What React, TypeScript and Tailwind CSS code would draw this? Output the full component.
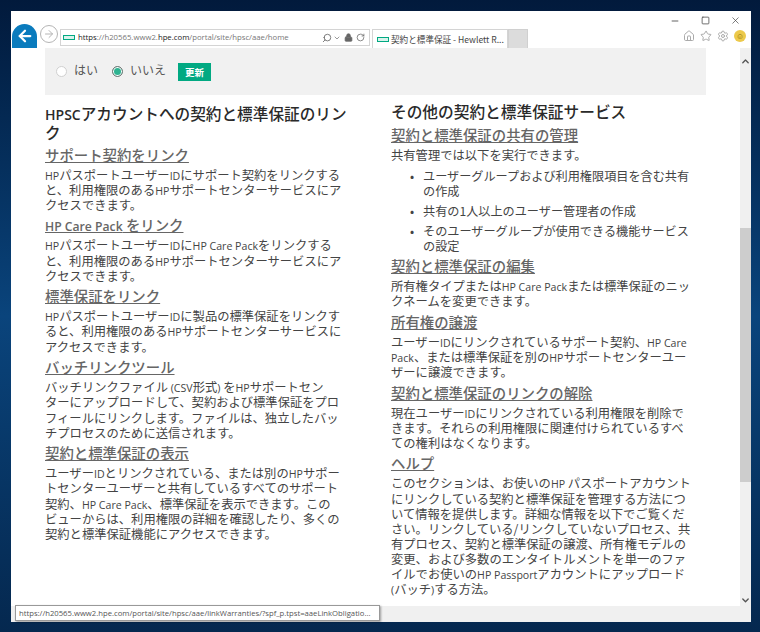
import React from 'react';
import { Search, ChevronDown, ChevronUp, Lock, RotateCw, Home, Star, Settings, ArrowLeft, ArrowRight, Minus, Square, X } from 'lucide-react';

const JP = "font-['Noto_Sans_CJK_JP','Noto_Sans',sans-serif]";

function T({ s, small }: { s: string; small: string }) {
  const parts = s.split(/([A-Za-z][A-Za-z .()]*[A-Za-z.)]|[()])/);
  return (
    <>
      {parts.map((p, i) =>
        /^[A-Za-z()]/.test(p) ? (
          <span key={i} className={`font-['Open_Sans',sans-serif] leading-[0] ${small}`}>{p}</span>
        ) : (
          <span key={i}>{p}</span>
        )
      )}
    </>
  );
}

function Lines({ lines }: { lines: string[] }) {
  return (
    <div className="text-[12.3px] text-[#444] whitespace-nowrap">
      {lines.map((l, i) => (
        <p key={i} className="h-[15.15px] leading-[15.15px] overflow-visible">
          <T s={l} small="text-[10.6px]" />
        </p>
      ))}
    </div>
  );
}

function Sub({ children }: { children: string }) {
  return (
    <h3 className="mt-[3.5px] mb-[5px] h-[17px] text-[14.4px] leading-[17px] font-medium text-[#666] underline underline-offset-[1px] whitespace-nowrap">
      <T s={children} small="text-[12.2px] font-semibold" />
    </h3>
  );
}

function Li({ lines }: { lines: string[] }) {
  return (
    <li className="flex mt-[5px] text-[12.15px] text-[#444] whitespace-nowrap">
      <span className="w-[32px] pl-[19px] shrink-0 leading-[15.15px]">•</span>
      <span>
        {lines.map((l, i) => (
          <span key={i} className="block h-[15.15px] leading-[15.15px]">{l}</span>
        ))}
      </span>
    </li>
  );
}

function HpLogo() {
  return <span className="w-[12px] h-[5px] border-[1.5px] border-[#01a982] bg-[#d9f3ec] shrink-0" />;
}

export default function App() {
  return (
    <div className={`${JP} w-[760px] h-[632px] overflow-hidden pt-[11px] pl-[11px] bg-gradient-to-b from-[#021a3c] via-[#0a447c] to-[#05284f]`}>
      <div className="relative w-[740px] h-[611px] bg-white flex flex-col">
        {/* toolbar */}
        <div className="h-[37px] shrink-0 flex items-start">
          <div className="mt-[13px] ml-[1px] w-[25px] h-[24px] rounded-t-full bg-[#0a7bbd] flex items-center justify-center overflow-hidden">
            <ArrowLeft size={18} strokeWidth={3} className="text-white" />
          </div>
          <div className="mt-[14px] ml-[3px] w-[18px] h-[18px] rounded-full border border-[#b5b5b5] flex items-center justify-center">
            <ArrowRight size={12} className="text-[#b5b5b5]" />
          </div>
          <div className="mt-[18px] ml-[2px] w-[310px] h-[17px] border border-[#d4d4d4] flex items-center pl-[2px] pr-[4px] font-['Open_Sans',sans-serif] text-[7.75px] text-[#777] whitespace-nowrap">
            <HpLogo />
            <span className="text-[#222] ml-[3px]">https</span>
            <span>://h20565.www2.</span>
            <span className="text-[#222]">hpe.com</span>
            <span>/portal/site/hpsc/aae/home</span>
            <div className="ml-auto flex items-center text-[#666]">
              <Search size={10} className="-scale-x-100" />
              <ChevronDown size={8} className="ml-[1px] mr-[3px]" />
              <Lock size={9} className="mr-[3px] fill-[#666]" />
              <RotateCw size={9} />
            </div>
          </div>
          <div className="mt-[18px] ml-[2px] w-[136px] h-[19px] border border-b-0 border-[#d4d4d4] flex items-center pl-[4px] pr-[4px] text-[8.6px] text-[#444] whitespace-nowrap">
            <HpLogo />
            <span className="ml-[2px]">契約と標準保証 - Hewlett R...</span>
            <X size={9} className="ml-auto text-[#888]" />
          </div>
          <div className="mt-[18px] w-[20px] h-[19px] bg-[#dcdcdc] border border-b-0 border-[#d0d0d0]" />
          <div className="ml-auto shrink-0 flex flex-col items-end">
            <div className="flex items-center h-[19px] pr-[10px] text-[#444]">
              <Minus size={10} className="mr-[21px]" />
              <Square size={9} className="mr-[20px]" />
              <X size={11} strokeWidth={1.5} />
            </div>
            <div className="flex items-center gap-[5px] text-[#aaa] pr-[5px]">
              <Home size={12} />
              <Star size={12} />
              <Settings size={12} />
              <span className="w-[12px] h-[12px] rounded-full bg-[#ecc94b] text-[8px] leading-[12px] text-center text-[#8a6d00]">☺</span>
            </div>
          </div>
        </div>

        {/* content */}
        <div className="flex flex-1 min-h-0">
          <div className="flex-1 min-w-0 pl-[34px] pr-[34px]">
            <div className="h-[47px] bg-[#f1f1f1] flex items-center pl-[11px] text-[12px] text-[#555]">
              <span className="w-[11px] h-[11px] rounded-full border border-[#d0d0d0] bg-white mr-[7px]" />
              <span className="mr-[14px] -mt-[3px]">はい</span>
              <span className="w-[11px] h-[11px] rounded-full border border-[#777] bg-[#2fb391] shadow-[inset_0_0_0_1px_#fff] mr-[7px]" />
              <span className="mr-[12px] -mt-[3px]">いいえ</span>
              <span className="w-[33px] h-[18px] bg-[#01a982] text-white text-[9.5px] font-bold leading-[18px] text-center">更新</span>
            </div>
            <div className="flex pt-[9px]">
              <div className="w-[346px] shrink-0">
                <h2 className="text-[15.65px] font-medium text-[#2a2a2a] whitespace-nowrap mb-[0.5px]">
                  <span className="block h-[19px] leading-[19px]">
                    <span className="font-['Open_Sans',sans-serif] text-[14px] font-semibold leading-[0]">HPSC</span>アカウントへの契約と標準保証のリン
                  </span>
                  <span className="block h-[19px] leading-[19px]">ク</span>
                </h2>
                <Sub>サポート契約をリンク</Sub>
                <Lines lines={['HPパスポートユーザーIDにサポート契約をリンクする', 'と、利用権限のあるHPサポートセンターサービスにア', 'クセスできます。']} />
                <Sub>HP Care Pack をリンク</Sub>
                <Lines lines={['HPパスポートユーザーIDにHP Care Packをリンクする', 'と、利用権限のあるHPサポートセンターサービスにア', 'クセスできます。']} />
                <Sub>標準保証をリンク</Sub>
                <Lines lines={['HPパスポートユーザーIDに製品の標準保証をリンクす', 'ると、利用権限のあるHPサポートセンターサービスに', 'アクセスできます。']} />
                <Sub>バッチリンクツール</Sub>
                <Lines lines={['バッチリンクファイル (CSV形式) をHPサポートセン', 'ターにアップロードして、契約および標準保証をプロ', 'フィールにリンクします。ファイルは、独立したバッ', 'チプロセスのために送信されます。']} />
                <Sub>契約と標準保証の表示</Sub>
                <Lines lines={['ユーザーIDとリンクされている、または別のHPサポー', 'トセンターユーザーと共有しているすべてのサポート', '契約、HP Care Pack、標準保証を表示できます。この', 'ビューからは、利用権限の詳細を確認したり、多くの', '契約と標準保証機能にアクセスできます。']} />
              </div>
              <div className="flex-1 -mt-[2px]">
                <h2 className="h-[20px] text-[15.7px] leading-[19px] font-medium text-[#2a2a2a] whitespace-nowrap">その他の契約と標準保証サービス</h2>
                <Sub>契約と標準保証の共有の管理</Sub>
                <Lines lines={['共有管理では以下を実行できます。']} />
                <ul>
                  <Li lines={['ユーザーグループおよび利用権限項目を含む共有', 'の作成']} />
                  <Li lines={['共有の1人以上のユーザー管理者の作成']} />
                  <Li lines={['そのユーザーグループが使用できる機能サービス', 'の設定']} />
                </ul>
                <Sub>契約と標準保証の編集</Sub>
                <Lines lines={['所有権タイプまたはHP Care Packまたは標準保証のニッ', 'クネームを変更できます。']} />
                <Sub>所有権の譲渡</Sub>
                <Lines lines={['ユーザーIDにリンクされているサポート契約、HP Care', 'Pack、または標準保証を別のHPサポートセンターユー', 'ザーに譲渡できます。']} />
                <Sub>契約と標準保証のリンクの解除</Sub>
                <Lines lines={['現在ユーザーIDにリンクされている利用権限を削除で', 'きます。それらの利用権限に関連付けられているすべ', 'ての権利はなくなります。']} />
                <Sub>ヘルプ</Sub>
                <Lines lines={['このセクションは、お使いのHP パスポートアカウント', 'にリンクしている契約と標準保証を管理する方法につ', 'いて情報を提供します。詳細な情報を以下でご覧くだ', 'さい。リンクしている/リンクしていないプロセス、共', '有プロセス、契約と標準保証の譲渡、所有権モデルの', '変更、および多数のエンタイトルメントを単一のファ', 'イルでお使いのHP Passportアカウントにアップロード', '(バッチ)する方法。']} />
              </div>
            </div>
          </div>
          {/* scrollbar */}
          <div className="w-[11px] shrink-0 bg-[#f0f0f0] flex flex-col items-center">
            <ChevronUp size={11} strokeWidth={3} className="mt-[8px] text-[#555]" />
            <div className="mt-[161px] w-full h-[259px] bg-[#cdcdcd]" />
            <ChevronDown size={11} strokeWidth={3} className="mt-[113px] text-[#555]" />
          </div>
        </div>
        <div className="h-[16px] shrink-0 bg-[#f0f0f0]" />

        {/* link tooltip */}
        <div className="absolute left-[4px] bottom-[1px] w-[365px] h-[16px] bg-white border border-[#999] shadow-[1px_1px_2px_rgba(0,0,0,0.35)] pl-[3px] font-['Open_Sans',sans-serif] text-[7.7px] leading-[14px] text-[#555] whitespace-nowrap overflow-hidden">
          https://h20565.www2.hpe.com/portal/site/hpsc/aae/linkWarranties/?spf_p.tpst=aaeLinkObligatio...
        </div>
      </div>
    </div>
  );
}
